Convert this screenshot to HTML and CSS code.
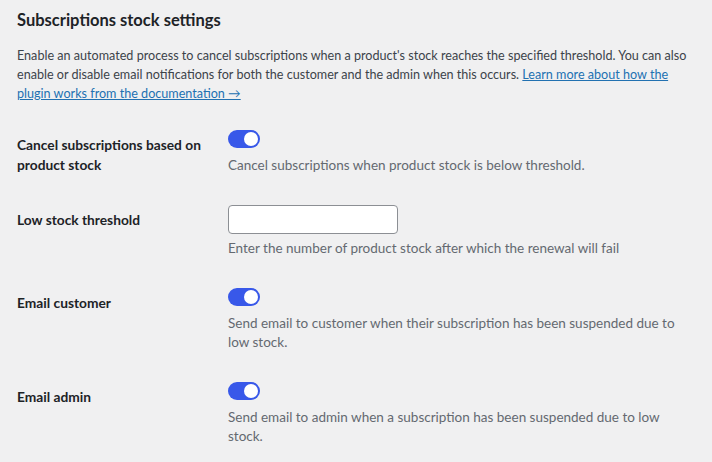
FILE: index.html
```html
<!DOCTYPE html>
<html lang="en">
<head>
<meta charset="utf-8">
<title>Subscriptions stock settings</title>
<link rel="stylesheet" href="styles.css">
</head>
<body>
<main class="page">
  <h2 class="title">Subscriptions stock settings</h2>
  <p class="intro">Enable an automated process to cancel subscriptions when a product's stock reaches the specified threshold. You can also enable or disable email notifications for both the customer and the admin when this occurs. <a href="#" class="link">Learn more about how the plugin works from the documentation →</a></p>

  <div class="form">
    <div class="row">
      <div class="label">Cancel subscriptions based on product stock</div>
      <div class="field">
        <span class="toggle on"><span class="knob"></span></span>
        <p class="desc">Cancel subscriptions when product stock is below threshold.</p>
      </div>
    </div>

    <div class="row">
      <div class="label">Low stock threshold</div>
      <div class="field">
        <input class="input" type="text">
        <p class="desc desc-input">Enter the number of product stock after which the renewal will fail</p>
      </div>
    </div>

    <div class="row">
      <div class="label">Email customer</div>
      <div class="field">
        <span class="toggle on"><span class="knob"></span></span>
        <p class="desc">Send email to customer when their subscription has been suspended due to low stock.</p>
      </div>
    </div>

    <div class="row">
      <div class="label">Email admin</div>
      <div class="field">
        <span class="toggle on"><span class="knob"></span></span>
        <p class="desc">Send email to admin when a subscription has been suspended due to low stock.</p>
      </div>
    </div>
  </div>
</main>
</body>
</html>
```
FILE: styles.css
```css
* { box-sizing: border-box; }

html, body {
  margin: 0;
  background: #f0f0f1;
}

body {
  font-family: "Lato", "Noto Sans", sans-serif;
  color: #1d2327;
}

.page {
  padding: 8px 17px 0 17px;
}

.title {
  margin: 0;
  font-size: 16.5px;
  line-height: 24px;
  font-weight: 700;
  color: #1d2327;
}

.intro {
  margin: 13.5px 0 0 0;
  font-size: 12.6px;
  line-height: 19px;
  color: #3c434a;
  max-width: 678px;
}

.link {
  color: #2271b1;
  text-decoration: underline;
}

.form {
  margin-top: 12.5px;
}

.row {
  display: grid;
  grid-template-columns: 211px 1fr;
}

.label {
  padding-top: 20px;
  width: 190px;
  font-size: 13.75px;
  line-height: 20px;
  font-weight: 700;
  color: #1d2327;
}

.field {
  padding: 15px 0;
}

.toggle {
  display: block;
  position: relative;
  width: 32px;
  height: 18px;
  border-radius: 9px;
  background: #3858e9;
}

.toggle .knob {
  position: absolute;
  top: 2px;
  right: 2px;
  width: 14px;
  height: 14px;
  border-radius: 50%;
  background: #ffffff;
}

.input {
  display: block;
  width: 170px;
  height: 29px;
  margin: 0;
  border: 1px solid #8c8f94;
  border-radius: 4px;
  background: #ffffff;
}

.desc {
  margin: 8px 0 0 0;
  font-size: 13.5px;
  line-height: 19px;
  color: #646970;
}

.desc-input {
  margin-top: 5px;
}
```
